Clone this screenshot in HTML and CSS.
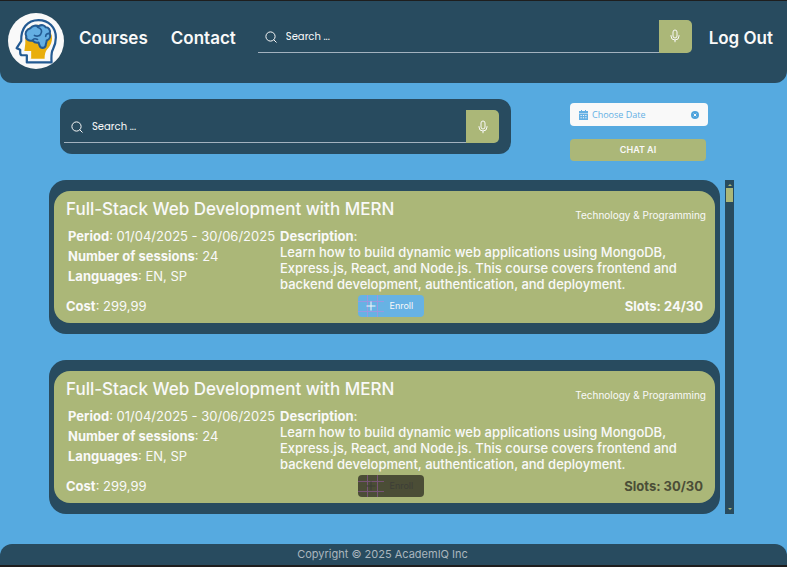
FILE: index.html
```html
<!DOCTYPE html>
<html lang="en">
<head>
<meta charset="utf-8">
<meta name="viewport" content="width=device-width, initial-scale=1">
<title>AcademIQ</title>
<link rel="stylesheet" href="styles.css">
</head>
<body>
<svg class="sprite" aria-hidden="true">
  <symbol id="icon-search" viewBox="0 0 12 12"><circle cx="5.5" cy="5.5" r="4.6"/><path d="M8.6 8.6 11.5 11.5"/></symbol>
  <symbol id="icon-mic" viewBox="0 0 10 14"><rect x="3" y="1" width="4" height="8" rx="2"/><path d="M1 6.2v.8a4 4 0 0 0 8 0v-.8M5 11v2.2"/></symbol>
  <symbol id="icon-plus" viewBox="0 0 10 10"><path d="M5 .5v9M.5 5h9"/></symbol>
</svg>

<header class="site-header">
  <a class="logo" href="#" aria-label="AcademIQ home">
    <svg viewBox="0 0 55 55" aria-hidden="true">
      <circle cx="27.500" cy="27.500" r="27.500" fill="#f9f9f9"/>
      <path d="M17 19c4-8 15-10 22-4 6 6 5 14 1 19-3 3-4 6-4 11H22v-7h-6l1-8z" fill="#e9ae0c"/>
      <path d="M18.500 48.500V41.500h-4.500c-1.500 0-2-1-2-2.500v-3l-3.500-1.500 4.500-7C12.500 15 19 7 30 7c10 0 17 7 17 17 0 7-2 10-3.500 13-1 3-1 7-.7 11.500z" fill="none" stroke="#235a92" stroke-width="2.200" stroke-linejoin="round"/>
      <path d="M22 45v-7h-6.500" fill="none" stroke="#f9f9f9" stroke-width="1.500"/>
      <path d="M22 15c2-3 6-3 8-2 3-2 6-1 7 1 3 0 5 3 4 6 1 3 0 6-3 7 0 2-1 3-1 5-1 3-5 3-6 0l-1-3c-3 1-5-1-6-2-3 1-7-1-6-4-2-3 0-7 4-8z" fill="#64afe3" stroke="#235a92" stroke-width="2" stroke-linejoin="round"/>
      <path d="M29 14c4 1 5 4 3 7-1 2-4 2-6 1M41 20c-3 0-4 1-4 3M24 27c1-2 3-2 5-1" fill="none" stroke="#235a92" stroke-width="1.600" stroke-linecap="round"/>
    </svg>
  </a>
  <nav class="nav">
    <a href="#">Courses</a>
    <a href="#">Contact</a>
  </nav>
  <form class="search" role="search">
    <label class="field">
      <svg class="search-icon" aria-hidden="true"><use href="#icon-search"/></svg>
      <input type="text" placeholder="Search ..." aria-label="Search the site">
    </label>
    <button class="mic" type="button" aria-label="Voice search"><svg aria-hidden="true"><use href="#icon-mic"/></svg></button>
  </form>
  <a class="logout" href="#">Log Out</a>
</header>

<main class="content">
  <section class="toolbar">
    <form class="search search-panel" role="search">
      <label class="field">
        <svg class="search-icon" aria-hidden="true"><use href="#icon-search"/></svg>
        <input type="text" placeholder="Search ..." aria-label="Search courses">
      </label>
      <button class="mic" type="button" aria-label="Voice search for courses"><svg aria-hidden="true"><use href="#icon-mic"/></svg></button>
    </form>
    <div class="actions">
      <div class="date">
        <svg class="calendar" viewBox="0 0 9 10" aria-hidden="true"><path d="M2 0h1v1h3V0h1v1h2v2H0V1h2zM0 3.500h9V10H0z" fill="#64b0e4"/><path d="M1.500 5.500h6M1.500 7.800h6" stroke="#f9f9f9" stroke-dasharray="1.200"/></svg>
        <input type="text" placeholder="Choose Date" aria-label="Choose date">
        <button type="button" aria-label="Clear date"><svg viewBox="0 0 8 8" aria-hidden="true"><circle cx="4" cy="4" r="4" fill="#4fa3dc"/><path d="M2.700 2.700l2.600 2.600M5.300 2.700 2.700 5.300" stroke="#f9f9f9"/></svg></button>
      </div>
      <button class="chat" type="button">CHAT AI</button>
    </div>
  </section>

  <section class="results" aria-label="Courses">
    <div class="list">
      <article class="card">
        <div class="card-body">
          <div class="card-head"><h2>Full-Stack Web Development with MERN</h2><span class="category">Technology &amp; Programming</span></div>
          <div class="details">
            <ul class="facts">
              <li><b>Period</b>: 01/04/2025 - 30/06/2025</li>
              <li><b>Number of sessions</b>: 24</li>
              <li><b>Languages</b>: EN, SP</li>
            </ul>
            <div class="description"><b>Description</b>:<p>Learn how to build dynamic web applications using MongoDB, Express.js, React, and Node.js. This course covers frontend and backend development, authentication, and deployment.</p></div>
          </div>
          <div class="card-foot">
            <span><b>Cost</b>: 299,99</span>
            <button class="enroll" type="button"><svg aria-hidden="true"><use href="#icon-plus"/></svg>Enroll</button>
            <b class="slots">Slots: 24/30</b>
          </div>
        </div>
      </article>
      <article class="card">
        <div class="card-body">
          <div class="card-head"><h2>Full-Stack Web Development with MERN</h2><span class="category">Technology &amp; Programming</span></div>
          <div class="details">
            <ul class="facts">
              <li><b>Period</b>: 01/04/2025 - 30/06/2025</li>
              <li><b>Number of sessions</b>: 24</li>
              <li><b>Languages</b>: EN, SP</li>
            </ul>
            <div class="description"><b>Description</b>:<p>Learn how to build dynamic web applications using MongoDB, Express.js, React, and Node.js. This course covers frontend and backend development, authentication, and deployment.</p></div>
          </div>
          <div class="card-foot">
            <span><b>Cost</b>: 299,99</span>
            <button class="enroll" type="button" disabled><svg aria-hidden="true"><use href="#icon-plus"/></svg>Enroll</button>
            <b class="slots full">Slots: 30/30</b>
          </div>
        </div>
      </article>
    </div>
    <div class="scrollbar" aria-hidden="true"><i class="up"></i><i class="thumb"></i><i class="down"></i></div>
  </section>
</main>

<footer class="site-footer">Copyright © 2025 AcademIQ Inc</footer>
</body>
</html>
```
FILE: styles.css
```css
:root {
  --navy: #284b5f;
  --sky: #56aae0;
  --olive: #abb778;
  --light: #f9f9f9;
  --edge: #1e1e1e;
}

* { box-sizing: border-box; }

body {
  margin: 0;
  min-height: 100vh;
  display: flex;
  flex-direction: column;
  background: var(--sky);
  color: var(--light);
  border-top: 1px solid var(--edge);
  border-bottom: 2px solid var(--edge);
  font: 400 13px/16px Inter, "Liberation Sans", sans-serif;
}

a { color: inherit; text-decoration: none; }
button, input { font: inherit; color: inherit; border: 0; padding: 0; background: none; }
h2, p, ul { margin: 0; padding: 0; font-weight: inherit; list-style: none; }
b { font-weight: 700; }
svg { display: block; }
.sprite { position: absolute; width: 0; height: 0; }

.site-header {
  display: flex;
  align-items: center;
  padding: 12px 14px 14px 8px;
  background: var(--navy);
  border-radius: 0 0 12px 12px;
  font-size: 17px;
  line-height: 24px;
  font-weight: 600;
}
.logo svg { width: 56px; height: 56px; }
.nav { display: flex; gap: 23px; margin: 0 22px 6px 15px; }
.logout { margin: 0 0 6px 17px; }

.search { display: flex; flex: 1; font: 400 10px/16px Poppins, Inter, sans-serif; }
.site-header .search { margin-bottom: 10px; }
.field {
  display: flex;
  flex: 1;
  align-items: center;
  gap: 9px;
  padding: 2px 0 0 7px;
  border-bottom: 1px solid #a3b2bf;
}
.field input { flex: 1; min-width: 0; outline: 0; }
input::placeholder { color: inherit; opacity: 1; }
.search-icon { width: 12px; height: 12px; fill: none; stroke: var(--light); stroke-width: 1; }
.mic {
  display: grid;
  place-items: center;
  width: 33px;
  height: 33px;
  background: var(--olive);
  border-radius: 0 5px 5px 0;
}
.mic svg { width: 10px; height: 14px; fill: none; stroke: var(--light); stroke-width: 1; }

.content { flex: 1; padding: 16px 53px 29px 49px; }
.toolbar { display: flex; justify-content: space-between; align-items: flex-start; padding: 0 26px 0 11px; margin-bottom: 19px; }
.search-panel {
  flex: 0 1 451px;
  background: var(--navy);
  border-radius: 12px;
  padding: 11px 12px 11px 4px;
}
.actions { display: flex; flex-direction: column; gap: 13px; padding-top: 4px; width: 138px; }
.date {
  display: flex;
  align-items: center;
  height: 23px;
  gap: 4px;
  padding: 0 9px;
  background: var(--light);
  color: #64b0e4;
  border-radius: 4px;
  font: 400 9px/12px "Open Sans", sans-serif;
}
.date input { flex: 1; min-width: 0; outline: 0; }
.calendar { width: 9px; height: 10px; }
.date button svg { width: 8px; height: 8px; }
.chat { height: 22px; background: var(--olive); border-radius: 4px; font-size: 9px; font-weight: 600; margin-right: 2px; }

.results { display: flex; gap: 5px; }
.list { flex: 1; display: grid; gap: 26px; }
.card { padding: 11px 5px; background: var(--navy); border-radius: 17px; }
.card-body { padding: 6px 9px 6px 12px; background: var(--olive); border-radius: 16px; }
.card-head { display: flex; justify-content: space-between; align-items: flex-end; margin-bottom: 6px; }
.card-head h2 { font-size: 17px; font-weight: 500; line-height: 24px; padding-bottom: 1px; }
.category { font-size: 10px; line-height: 14px; }
.details { display: grid; grid-template-columns: 205px minmax(0, 400px); gap: 7px; padding-left: 2px; }
.facts { display: flex; flex-direction: column; gap: 4px; white-space: nowrap; }
.description { font-weight: 500; }
.card-foot { display: grid; grid-template-columns: 1fr auto 1fr; align-items: center; padding-right: 3px; margin-top: 3px; }
.slots { text-align: right; }
.slots.full { color: #4b4e37; }

/* The enroll icon sits on a faint alignment grid. */
.enroll {
  display: flex;
  align-items: center;
  gap: 14px;
  width: 66px;
  height: 22px;
  margin-left: 12px;
  padding-left: 8px;
  border-radius: 4px;
  font-size: 9px;
  background:
    linear-gradient(#9b98df, #9b98df) 9px 0 / 1px 22px no-repeat,
    linear-gradient(#9b98df, #9b98df) 19px 0 / 1px 22px no-repeat,
    linear-gradient(#9b98df, #9b98df) 0 6px / 26px 1px no-repeat,
    linear-gradient(#9b98df, #9b98df) 0 16px / 26px 1px no-repeat,
    #67b2e4;
}
.enroll svg { width: 10px; height: 10px; fill: none; stroke: currentColor; stroke-width: 1; }
.enroll:disabled {
  color: #3d3e36;
  background:
    linear-gradient(#765375, #765375) 9px 0 / 1px 22px no-repeat,
    linear-gradient(#765375, #765375) 19px 0 / 1px 22px no-repeat,
    linear-gradient(#765375, #765375) 0 6px / 26px 1px no-repeat,
    linear-gradient(#765375, #765375) 0 16px / 26px 1px no-repeat,
    #4b4d36;
}

.scrollbar {
  display: flex;
  flex-direction: column;
  align-items: center;
  width: 9px;
  padding: 4px 1px;
  background: var(--navy);
}
.scrollbar .up, .scrollbar .down { border: 2px solid transparent; }
.scrollbar .up { border-top: 0; border-bottom-color: var(--olive); }
.scrollbar .down { border-bottom: 0; border-top-color: var(--olive); margin-top: auto; }
.thumb { width: 7px; height: 14px; margin-top: 2px; background: var(--olive); }

.site-footer {
  padding: 2px 22px 3px 0;
  background: var(--navy);
  border-radius: 12px 12px 0 0;
  color: #aab6be;
  font-size: 11px;
  text-align: center;
}
```
